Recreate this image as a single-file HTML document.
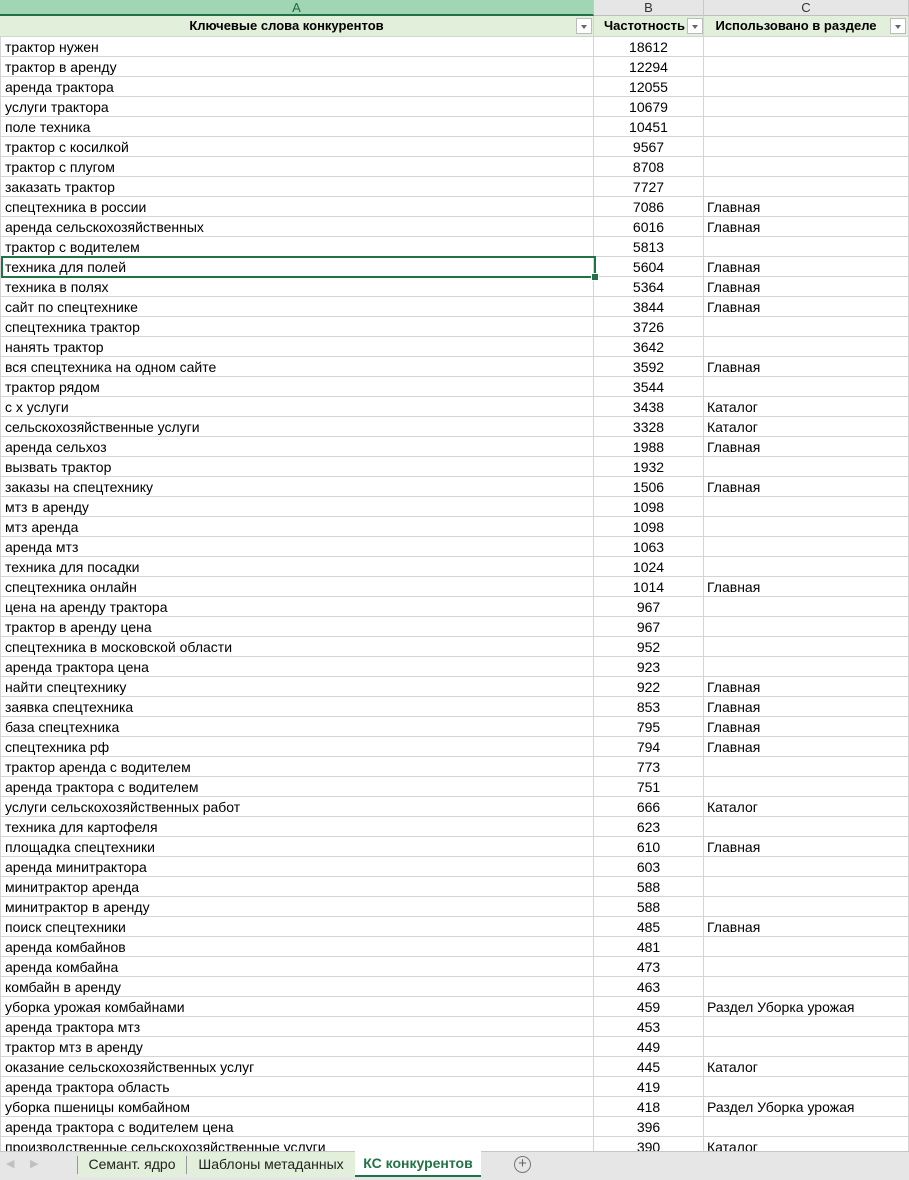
<!DOCTYPE html>
<html><head><meta charset="utf-8"><style>
*{margin:0;padding:0;box-sizing:border-box}
body{width:909px;height:1180px;overflow:hidden;background:#fff;font-family:"Liberation Sans",sans-serif;font-size:14px;color:#000;position:relative}
.ch{position:absolute;top:0;height:16px;background:#e6e6e6;border-bottom:1px solid #bfbfbf;border-right:1px solid #c8c8c8;text-align:center;font-size:13px;line-height:15px;color:#333}
.ch.a{background:#a0d6b4;border-bottom:2px solid #217346;color:#1e6b40}
.hr{position:absolute;top:16px;height:21px;background:#e2efda;border-bottom:1px solid #d4d4d4;border-right:1px solid #d4d4d4;font-weight:bold;font-size:13px;line-height:20px;text-align:center}
.fb{position:absolute;top:2px;width:16px;height:16px;background:#fff;border:1px solid #bcbcbc}
.fb:after{content:"";position:absolute;left:4px;top:6px;border-left:3px solid transparent;border-right:3px solid transparent;border-top:4px solid #666}
#rows{position:absolute;top:37px;left:0;width:909px}
.r{height:20px;border-bottom:1px solid #d4d4d4;position:relative;line-height:20px;white-space:nowrap}
.r div{position:absolute;top:0;height:20px;border-right:1px solid #d4d4d4}
.c1{left:0;width:594px;padding-left:4px;border-left:1px solid #d4d4d4}
.c2{left:594px;width:110px;text-align:center}
.c3{left:704px;width:205px;padding-left:3px}
.sel{position:absolute;left:1px;top:256px;width:595px;height:22px;border:2px solid #217346}
.sel:after{content:"";position:absolute;right:-5px;bottom:-5px;width:6px;height:6px;background:#217346;border:1px solid #fff}
#tabs{position:absolute;top:1151px;left:0;width:909px;height:29px;background:#e6e6e6;border-top:1px solid #c6c6c6}
.tb{position:absolute;top:0;height:25px;background:#e2efda;line-height:25px;text-align:center;font-size:14px;color:#222}
.sep{position:absolute;top:4px;width:1px;height:18px;background:#999}
</style></head><body>
<div class="ch a" style="left:0;width:594px">A</div>
<div class="ch" style="left:594px;width:110px">B</div>
<div class="ch" style="left:704px;width:205px">C</div>
<div class="hr" style="left:0;width:594px;padding-right:20px">Ключевые слова конкурентов<div class="fb" style="left:576px"></div></div>
<div class="hr" style="left:594px;width:110px;padding-right:18px;text-align:right">Частотность<div class="fb" style="left:93px"></div></div>
<div class="hr" style="left:704px;width:205px;padding-right:20px">Использовано в разделе<div class="fb" style="left:186px"></div></div>
<div id="rows">
<div class="r"><div class="c1">трактор нужен</div><div class="c2">18612</div><div class="c3"></div></div>
<div class="r"><div class="c1">трактор в аренду</div><div class="c2">12294</div><div class="c3"></div></div>
<div class="r"><div class="c1">аренда трактора</div><div class="c2">12055</div><div class="c3"></div></div>
<div class="r"><div class="c1">услуги трактора</div><div class="c2">10679</div><div class="c3"></div></div>
<div class="r"><div class="c1">поле техника</div><div class="c2">10451</div><div class="c3"></div></div>
<div class="r"><div class="c1">трактор с косилкой</div><div class="c2">9567</div><div class="c3"></div></div>
<div class="r"><div class="c1">трактор с плугом</div><div class="c2">8708</div><div class="c3"></div></div>
<div class="r"><div class="c1">заказать трактор</div><div class="c2">7727</div><div class="c3"></div></div>
<div class="r"><div class="c1">спецтехника в россии</div><div class="c2">7086</div><div class="c3">Главная</div></div>
<div class="r"><div class="c1">аренда сельскохозяйственных</div><div class="c2">6016</div><div class="c3">Главная</div></div>
<div class="r"><div class="c1">трактор с водителем</div><div class="c2">5813</div><div class="c3"></div></div>
<div class="r"><div class="c1">техника для полей</div><div class="c2">5604</div><div class="c3">Главная</div></div>
<div class="r"><div class="c1">техника в полях</div><div class="c2">5364</div><div class="c3">Главная</div></div>
<div class="r"><div class="c1">сайт по спецтехнике</div><div class="c2">3844</div><div class="c3">Главная</div></div>
<div class="r"><div class="c1">спецтехника трактор</div><div class="c2">3726</div><div class="c3"></div></div>
<div class="r"><div class="c1">нанять трактор</div><div class="c2">3642</div><div class="c3"></div></div>
<div class="r"><div class="c1">вся спецтехника на одном сайте</div><div class="c2">3592</div><div class="c3">Главная</div></div>
<div class="r"><div class="c1">трактор рядом</div><div class="c2">3544</div><div class="c3"></div></div>
<div class="r"><div class="c1">с х услуги</div><div class="c2">3438</div><div class="c3">Каталог</div></div>
<div class="r"><div class="c1">сельскохозяйственные услуги</div><div class="c2">3328</div><div class="c3">Каталог</div></div>
<div class="r"><div class="c1">аренда сельхоз</div><div class="c2">1988</div><div class="c3">Главная</div></div>
<div class="r"><div class="c1">вызвать трактор</div><div class="c2">1932</div><div class="c3"></div></div>
<div class="r"><div class="c1">заказы на спецтехнику</div><div class="c2">1506</div><div class="c3">Главная</div></div>
<div class="r"><div class="c1">мтз в аренду</div><div class="c2">1098</div><div class="c3"></div></div>
<div class="r"><div class="c1">мтз аренда</div><div class="c2">1098</div><div class="c3"></div></div>
<div class="r"><div class="c1">аренда мтз</div><div class="c2">1063</div><div class="c3"></div></div>
<div class="r"><div class="c1">техника для посадки</div><div class="c2">1024</div><div class="c3"></div></div>
<div class="r"><div class="c1">спецтехника онлайн</div><div class="c2">1014</div><div class="c3">Главная</div></div>
<div class="r"><div class="c1">цена на аренду трактора</div><div class="c2">967</div><div class="c3"></div></div>
<div class="r"><div class="c1">трактор в аренду цена</div><div class="c2">967</div><div class="c3"></div></div>
<div class="r"><div class="c1">спецтехника в московской области</div><div class="c2">952</div><div class="c3"></div></div>
<div class="r"><div class="c1">аренда трактора цена</div><div class="c2">923</div><div class="c3"></div></div>
<div class="r"><div class="c1">найти спецтехнику</div><div class="c2">922</div><div class="c3">Главная</div></div>
<div class="r"><div class="c1">заявка спецтехника</div><div class="c2">853</div><div class="c3">Главная</div></div>
<div class="r"><div class="c1">база спецтехника</div><div class="c2">795</div><div class="c3">Главная</div></div>
<div class="r"><div class="c1">спецтехника рф</div><div class="c2">794</div><div class="c3">Главная</div></div>
<div class="r"><div class="c1">трактор аренда с водителем</div><div class="c2">773</div><div class="c3"></div></div>
<div class="r"><div class="c1">аренда трактора с водителем</div><div class="c2">751</div><div class="c3"></div></div>
<div class="r"><div class="c1">услуги сельскохозяйственных работ</div><div class="c2">666</div><div class="c3">Каталог</div></div>
<div class="r"><div class="c1">техника для картофеля</div><div class="c2">623</div><div class="c3"></div></div>
<div class="r"><div class="c1">площадка спецтехники</div><div class="c2">610</div><div class="c3">Главная</div></div>
<div class="r"><div class="c1">аренда минитрактора</div><div class="c2">603</div><div class="c3"></div></div>
<div class="r"><div class="c1">минитрактор аренда</div><div class="c2">588</div><div class="c3"></div></div>
<div class="r"><div class="c1">минитрактор в аренду</div><div class="c2">588</div><div class="c3"></div></div>
<div class="r"><div class="c1">поиск спецтехники</div><div class="c2">485</div><div class="c3">Главная</div></div>
<div class="r"><div class="c1">аренда комбайнов</div><div class="c2">481</div><div class="c3"></div></div>
<div class="r"><div class="c1">аренда комбайна</div><div class="c2">473</div><div class="c3"></div></div>
<div class="r"><div class="c1">комбайн в аренду</div><div class="c2">463</div><div class="c3"></div></div>
<div class="r"><div class="c1">уборка урожая комбайнами</div><div class="c2">459</div><div class="c3">Раздел Уборка урожая</div></div>
<div class="r"><div class="c1">аренда трактора мтз</div><div class="c2">453</div><div class="c3"></div></div>
<div class="r"><div class="c1">трактор мтз в аренду</div><div class="c2">449</div><div class="c3"></div></div>
<div class="r"><div class="c1">оказание сельскохозяйственных услуг</div><div class="c2">445</div><div class="c3">Каталог</div></div>
<div class="r"><div class="c1">аренда трактора область</div><div class="c2">419</div><div class="c3"></div></div>
<div class="r"><div class="c1">уборка пшеницы комбайном</div><div class="c2">418</div><div class="c3">Раздел Уборка урожая</div></div>
<div class="r"><div class="c1">аренда трактора с водителем цена</div><div class="c2">396</div><div class="c3"></div></div>
<div class="r"><div class="c1">производственные сельскохозяйственные услуги</div><div class="c2">390</div><div class="c3">Каталог</div></div>
</div>
<div class="sel"></div>
<div id="tabs">
<div style="position:absolute;left:6px;top:5px;color:#c0c0c0;font-size:11px">&#9664;</div>
<div style="position:absolute;left:30px;top:5px;color:#c0c0c0;font-size:11px">&#9654;</div>
<div class="tb" style="left:78px;width:108px">Семант. ядро</div>
<div class="sep" style="left:77px"></div>
<div class="sep" style="left:186px"></div>
<div class="tb" style="left:187px;width:168px">Шаблоны метаданных</div>
<div class="tb" style="left:355px;width:126px;background:#fff;color:#217346;font-weight:bold;border-bottom:2px solid #217346;height:26px;top:-1px">КС конкурентов</div>
<div style="position:absolute;left:514px;top:4px;width:17px;height:17px;border:1px solid #777;border-radius:50%;text-align:center;line-height:14px;color:#666;font-size:15px">+</div>
</div>
</body></html>
